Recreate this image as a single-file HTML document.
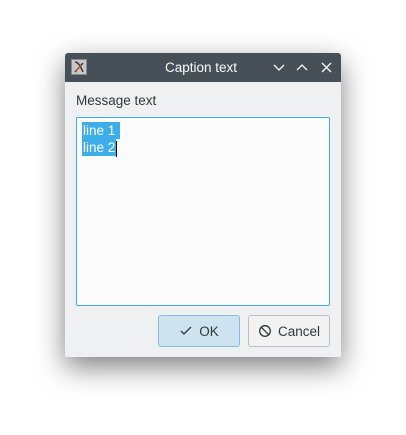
<!DOCTYPE html>
<html><head><style>
body{margin:0;width:406px;height:435px;background:#fff;font-family:"Liberation Sans","DejaVu Sans",sans-serif;position:relative;overflow:hidden}
.win{position:absolute;left:65px;top:53px;width:276px;height:304px;background:#eff0f1;border-radius:3px 3px 0 0;box-shadow:0 10px 28px rgba(0,0,0,.5)}
.title{position:absolute;left:0;top:0;width:276px;height:29px;background:#475057;border-radius:3px 3px 0 0;color:#fcfcfc;font-size:13.5px}
.title .t{position:absolute;left:100px;top:7px}
.icon{position:absolute;left:6px;top:6px;width:16px;height:16px;background:#c8c8c8;border:1px solid #888;box-sizing:border-box}
.lbl{position:absolute;left:11px;top:40px;font-size:13.5px;color:#31363b}
.ta{position:absolute;left:11px;top:64px;width:254px;height:189px;box-sizing:border-box;border:1px solid #3daee9;border-radius:2px;background:#fcfcfc;font-size:13.5px;color:#fff}
.sel{position:absolute;left:5px;background:#3daee9;padding:0 1px;height:17px;line-height:17px}
.btn{position:absolute;top:262px;height:32px;box-sizing:border-box;border-radius:3px;font-size:13.5px;color:#31363b;display:flex;align-items:center;justify-content:center;gap:6px}
</style></head><body>
<div class="win">
<div class="title"><div class="icon"><svg width="14" height="14" viewBox="0 0 14 14"><path d="M3 2 Q7 2 11 12 M11 3 L3 12" stroke="#333" stroke-width="1.4" fill="none"/><path d="M4 11 L9 5" stroke="#d5542a" stroke-width="1.2"/></svg></div><span class="t">Caption text</span>
<svg style="position:absolute;left:208px;top:9px" width="60" height="12" viewBox="0 0 60 12" fill="none" stroke="#fcfcfc" stroke-width="1.3"><path d="M1 3 L6 8 L11 3"/><path d="M24 8 L29 3 L34 8"/><path d="M49 1 L58 10 M58 1 L49 10"/></svg></div>
<div class="lbl">Message text</div>
<div class="ta"><div class="sel" style="top:4px">line 1&nbsp;</div><div class="sel" style="top:21px">line 2</div><div style="position:absolute;left:39px;top:23px;width:1px;height:16px;background:#000"></div></div>
<div class="btn" style="left:93px;width:82px;background:#cde4f0;border:1px solid #7fbfe0"><svg width="14" height="12" viewBox="0 0 14 12"><path d="M2 6 L5 9 L12 2" stroke="#31363b" stroke-width="1.3" fill="none"/></svg>OK</div>
<div class="btn" style="left:183px;width:82px;background:#f2f2f2;border:1px solid #bcbebf"><svg width="14" height="14" viewBox="0 0 14 14"><circle cx="7" cy="7" r="5.3" stroke="#31363b" stroke-width="1.3" fill="none"/><path d="M3.3 3.3 L10.7 10.7" stroke="#31363b" stroke-width="1.3"/></svg>Cancel</div>
</div>
</body></html>
